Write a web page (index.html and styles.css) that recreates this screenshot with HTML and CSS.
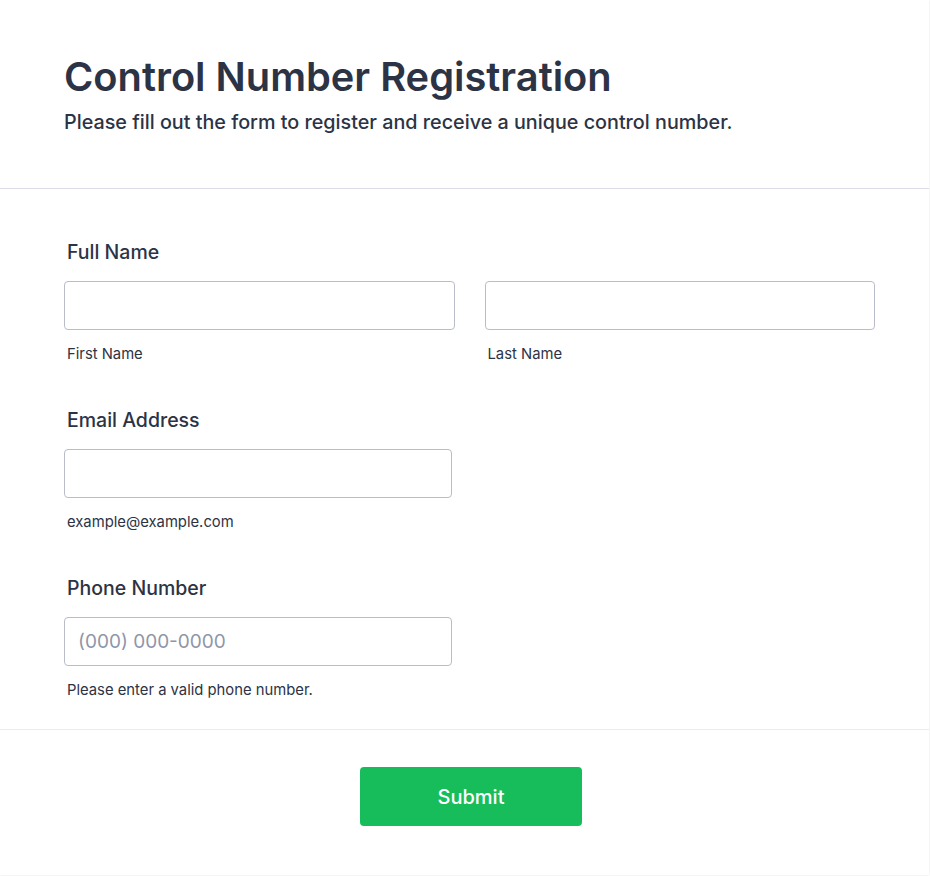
FILE: index.html
```html
<!DOCTYPE html>
<html lang="en">
<head>
    <meta charset="UTF-8">
    <title>Control Number Registration</title>
    <link rel="stylesheet" href="styles.css">
</head>
<body>
    <div class="form_card">
        <div class="form_header">
            <h1 class="form_title">Control Number Registration</h1>
            <p class="form_subtitle">Please fill out the form to register and receive a unique control number.</p>
        </div>
        <div class="form_body">
            <div class="field">
                <label class="field_label">Full Name</label>
                <div class="name_row">
                    <div class="sub_field">
                        <input class="text_input" type="text">
                        <span class="sub_label">First Name</span>
                    </div>
                    <div class="sub_field">
                        <input class="text_input" type="text">
                        <span class="sub_label">Last Name</span>
                    </div>
                </div>
            </div>
            <div class="field">
                <label class="field_label">Email Address</label>
                <div class="sub_field half">
                    <input class="text_input" type="email">
                    <span class="sub_label">example@example.com</span>
                </div>
            </div>
            <div class="field">
                <label class="field_label">Phone Number</label>
                <div class="sub_field half">
                    <input class="text_input" type="tel" placeholder="(000) 000-0000">
                    <span class="sub_label">Please enter a valid phone number.</span>
                </div>
            </div>
        </div>
        <div class="form_footer">
            <button class="submit_btn" type="button">Submit</button>
        </div>
    </div>
</body>
</html>
```

FILE: styles.css
```css
*{
    padding: 0;
    margin: 0;
    box-sizing: border-box;
}
html,body{
    width: 100%;
    height: 100%;
}
body{
    background-color: #fff;
    font-family: Inter, "Noto Sans", sans-serif;
    color: #2c3345;
}
.form_card{
    width: 929px;
    height: 875px;
    background-color: #fff;
    box-shadow: 0 0 2px rgba(0,0,0,0.12);
}
.form_header{
    padding: 54px 54px 53px 64px;
    border-bottom: 1px solid #dcdce9;
}
.form_title{
    font-size: 39.8px;
    line-height: 46px;
    font-weight: 600;
}
.form_subtitle{
    margin-top: 9px;
    font-size: 19.75px;
    line-height: 26px;
    font-weight: 500;
}
.form_body{
    padding: 49px 54px 29px 64px;
    display: flex;
    flex-direction: column;
    gap: 42px;
}
.field{
    display: flex;
    flex-direction: column;
}
.field_label{
    padding: 1px 0 0 3px;
    font-size: 19.5px;
    line-height: 26px;
    font-weight: 500;
    margin-bottom: 16px;
}
.name_row{
    display: grid;
    grid-template-columns: 1fr 1fr;
    column-gap: 30px;
}
.sub_field{
    display: flex;
    flex-direction: column;
}
.sub_field.half{
    width: 388px;
}
.text_input{
    width: 100%;
    height: 49px;
    border: 1px solid #b8bdc9;
    border-radius: 4px;
    padding: 0 13px;
    font-family: Inter, "Noto Sans", sans-serif;
    font-size: 19px;
    color: #2c3345;
    background-color: #fff;
    outline: none;
}
.text_input::placeholder{
    color: #8f96a8;
}
.sub_label{
    margin-top: 14px;
    padding-left: 3px;
    font-size: 14.8px;
    line-height: 20px;
}
.form_footer{
    border-top: 1px solid #ebebf0;
    padding: 37px 54px 0 64px;
    display: flex;
    justify-content: center;
}
.submit_btn{
    width: 222px;
    height: 59px;
    margin-left: 3px;
    border: none;
    border-radius: 4px;
    background-color: #18bd5b;
    color: #fff;
    font-family: Inter, "Noto Sans", sans-serif;
    font-size: 20px;
    font-weight: 500;
    cursor: pointer;
}
```
